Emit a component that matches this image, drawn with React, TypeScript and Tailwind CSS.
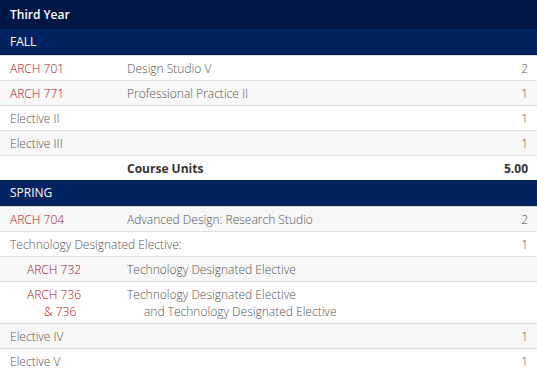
import React from "react"

type Row =
  | { kind: "head"; label: string }
  | { kind: "course"; code: string; code2?: string; title: string; title2?: string; hours?: string; indent?: boolean }
  | { kind: "text"; label: string; hours?: string }
  | { kind: "total"; label: string; hours: string }

const rows: Row[] = [
  { kind: "head", label: "FALL" },
  { kind: "course", code: "ARCH 701", title: "Design Studio V", hours: "2" },
  { kind: "course", code: "ARCH 771", title: "Professional Practice II", hours: "1" },
  { kind: "text", label: "Elective II", hours: "1" },
  { kind: "text", label: "Elective III", hours: "1" },
  { kind: "total", label: "Course Units", hours: "5.00" },
  { kind: "head", label: "SPRING" },
  { kind: "course", code: "ARCH 704", title: "Advanced Design: Research Studio", hours: "2" },
  { kind: "text", label: "Technology Designated Elective:", hours: "1" },
  { kind: "course", code: "ARCH 732", title: "Technology Designated Elective", indent: true },
  {
    kind: "course",
    code: "ARCH 736",
    code2: "& 736",
    title: "Technology Designated Elective",
    title2: "and Technology Designated Elective",
    indent: true,
  },
  { kind: "text", label: "Elective IV", hours: "1" },
  { kind: "text", label: "Elective V", hours: "1" },
]

export default function App() {
  // zebra striping runs through the whole table, headers don't reset it
  let stripe = 0
  return (
    <div
      className="w-[537px] h-[372px] overflow-hidden bg-white text-[12px] leading-[17px]"
      style={{ fontFamily: '"Open Sans", "Liberation Sans", sans-serif' }}
    >
      <div className="h-[29px] bg-[#001746] px-[10px] pt-[6px] font-semibold text-white">Third Year</div>
      {rows.map((r, i) => {
        if (r.kind === "head") {
          return (
            <div key={i} className="h-[26px] bg-[#01235f] border-b border-[#0a1d45] px-[10px] pt-[4px] text-white">
              {r.label}
            </div>
          )
        }
        const odd = stripe++ % 2 === 1
        const bg = odd ? "bg-[#f7f7f7]" : "bg-white"
        if (r.kind === "total") {
          return (
            <div key={i} className={`flex h-[25px] border-t border-[#dedede] ${bg} pl-[10px] pr-[9px] pt-[4px] font-bold text-[#333]`}>
              <div className="w-[117px]" />
              <div className="flex-1">{r.label}</div>
              <div>{r.hours}</div>
            </div>
          )
        }
        if (r.kind === "text") {
          return (
            <div key={i} className={`flex border-t border-[#dedede] ${bg} pl-[10px] pr-[9px] pt-[4px] pb-[3px] font-light text-[#555]`}>
              <div className="flex-1">{r.label}</div>
              <div>{r.hours}</div>
            </div>
          )
        }
        return (
          <div key={i} className={`flex border-t border-[#dedede] ${bg} pl-[10px] pr-[9px] pt-[4px] pb-[3px] font-light text-[#555]`}>
            <div className={`w-[117px] text-[#a3142e] ${r.indent ? "pl-[17px]" : ""}`}>
              <div>{r.code}</div>
              {r.code2 && <div className="pl-[17px]">{r.code2}</div>}
            </div>
            <div className="flex-1">
              <div>{r.title}</div>
              {r.title2 && <div className="pl-[17px]">{r.title2}</div>}
            </div>
            <div>{r.hours}</div>
          </div>
        )
      })}
    </div>
  )
}
